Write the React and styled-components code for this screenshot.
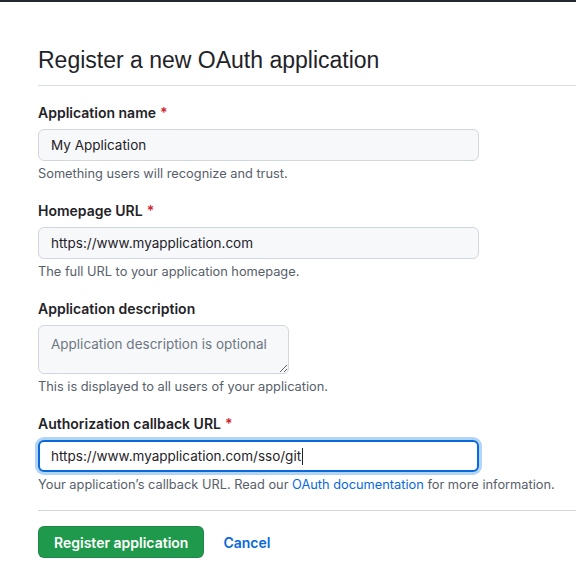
import styled, { createGlobalStyle } from 'styled-components'

const GlobalStyle = createGlobalStyle`
  html, body {
    margin: 0;
    padding: 0;
    background: #fff;
  }
  body {
    font-family: Inter, "Liberation Sans", sans-serif;
    color: #1f2328;
  }
`

const Page = styled.div`
  border-top: 2px solid #24292f;
  padding: 40px 0 0 38px;
  min-height: 576px;
  box-sizing: border-box;
`

const Header = styled.div`
  border-bottom: 1px solid #d8dee4;
  padding-bottom: 7px;
  margin-bottom: 17px;
`

const Title = styled.h1`
  margin: 0;
  font-family: "Liberation Sans", Arial, sans-serif;
  font-size: 23px;
  font-weight: 400;
  line-height: 36px;
`

const Group = styled.div`
  display: flex;
  flex-direction: column;
  align-items: flex-start;
  margin-bottom: 18px;
`

const Label = styled.label`
  font-size: 14px;
  font-weight: 600;
  line-height: 20px;
  margin-bottom: 6px;
`

const Required = styled.span`
  color: #cf222e;
  margin-left: 4px;
`

const TextInput = styled.input`
  box-sizing: border-box;
  width: 441px;
  height: 32px;
  padding: 5px 12px;
  font: inherit;
  font-size: 13.5px;
  color: #1f2328;
  background: #f6f8fa;
  border: 1px solid #d0d7de;
  border-radius: 6px;
  outline: none;
`

const FocusedBox = styled.div`
  box-sizing: border-box;
  width: 441px;
  height: 32px;
  padding: 0 11px;
  display: flex;
  align-items: center;
  font-size: 13.5px;
  color: #1f2328;
  background: #fff;
  border: 2px solid #0969da;
  border-radius: 6px;
  box-shadow: 0 0 0 3px rgba(84, 160, 240, 0.45);
`

const Caret = styled.span`
  display: inline-block;
  width: 1px;
  height: 17px;
  background: #1f2328;
  margin-left: 1px;
`

const TextArea = styled.textarea`
  box-sizing: border-box;
  width: 251px;
  height: 49px;
  padding: 8px 12px;
  font: inherit;
  font-size: 13.5px;
  line-height: 20px;
  background: #f6f8fa;
  border: 1px solid #d0d7de;
  border-radius: 6px;
  outline: none;
  resize: both;
  display: block;

  &::placeholder {
    color: #6e7781;
  }
`

const Note = styled.p`
  margin: 4px 0 0;
  font-size: 12.8px;
  line-height: 18px;
  color: #57606a;
`

const Link = styled.a`
  color: #0969da;
  text-decoration: none;
`

const Divider = styled.hr`
  border: 0;
  border-top: 1px solid #d0d7de;
  margin: -2px 0 15px;
`

const Actions = styled.div`
  display: flex;
  align-items: center;
  gap: 19px;
`

const SubmitButton = styled.button`
  height: 32px;
  padding: 0 15px;
  font: inherit;
  font-size: 14px;
  font-weight: 600;
  color: #fff;
  background: #1f9a4c;
  border: 1px solid rgba(31, 35, 40, 0.15);
  border-radius: 6px;
  cursor: pointer;
`

const CancelLink = styled.a`
  font-size: 14px;
  font-weight: 600;
  color: #0969da;
  text-decoration: none;
`

const Field = ({ label, required, children, note }) => (
  <Group>
    <Label>
      {label}
      {required && <Required>*</Required>}
    </Label>
    {children}
    <Note>{note}</Note>
  </Group>
)

export default function App() {
  return (
    <>
      <GlobalStyle />
      <Page>
        <Header>
          <Title>Register a new OAuth application</Title>
        </Header>
        <Field label="Application name" required note="Something users will recognize and trust.">
          <TextInput defaultValue="My Application" readOnly />
        </Field>
        <Field label="Homepage URL" required note="The full URL to your application homepage.">
          <TextInput defaultValue="https://www.myapplication.com" readOnly />
        </Field>
        <Field label="Application description" note="This is displayed to all users of your application.">
          <TextArea placeholder="Application description is optional" readOnly />
        </Field>
        <Field
          label="Authorization callback URL"
          required
          note={
            <>
              Your application’s callback URL. Read our <Link href="#">OAuth documentation</Link> for more
              information.
            </>
          }
        >
          <FocusedBox>
            https://www.myapplication.com/sso/git
            <Caret />
          </FocusedBox>
        </Field>
        <Divider />
        <Actions>
          <SubmitButton>Register application</SubmitButton>
          <CancelLink href="#">Cancel</CancelLink>
        </Actions>
      </Page>
    </>
  )
}
